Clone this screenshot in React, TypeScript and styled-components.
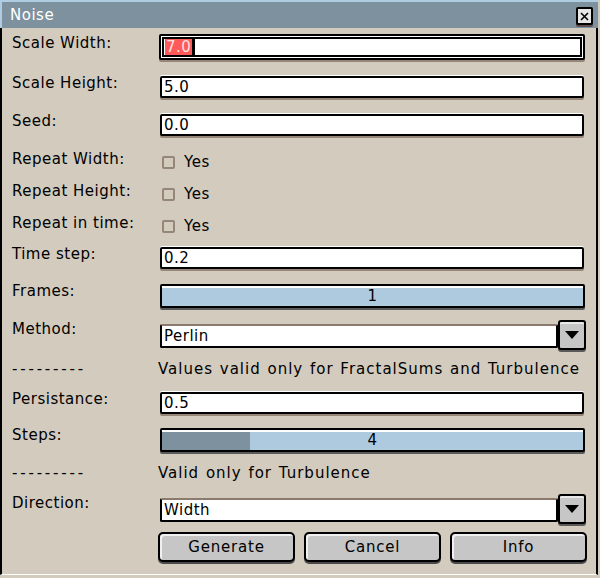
import React from 'react'
import styled, { createGlobalStyle } from 'styled-components'

const GlobalStyle = createGlobalStyle`
  html, body {
    margin: 0;
    padding: 0;
    background: #d2cbbe;
  }
  * {
    box-sizing: border-box;
  }
`

const Window = styled.div`
  width: 598px;
  height: 575px;
  background: #d2cbbe;
  font-family: 'DejaVu Sans', 'Liberation Sans', sans-serif;
  font-size: 15px;
  letter-spacing: 0.5px;
  color: #000;
  display: flex;
  flex-direction: column;
  box-shadow: 0 3px 0 #a08a7a;
`

const TitleBar = styled.div`
  height: 28px;
  flex: none;
  background: #7d929e;
  border-top: 2px solid #aecde0;
  border-left: 2px solid #aecde0;
  display: flex;
  align-items: center;
  justify-content: space-between;
  padding: 0 5px 0 8px;
`

const Title = styled.span`
  color: #fff;
  line-height: 18px;
`

const CloseButton = styled.div`
  width: 17px;
  height: 18px;
  margin-top: 2px;
  background: #e6e6e6;
  border: 2px solid #000;
  border-radius: 2px;
  box-shadow: 0 2px 0 #5a4f4f;
  display: flex;
  align-items: center;
  justify-content: center;
`

const Body = styled.div`
  flex: 1;
  border-left: 2px solid #000;
  border-right: 2px solid #000;
  border-bottom: 1px solid #fff;
  padding: 6px 10px 0 10px;
  display: flex;
  flex-direction: column;
`

const Row = styled.div<{ $h: number }>`
  height: ${p => p.$h}px;
  flex: none;
  display: grid;
  grid-template-columns: 148px 1fr;
  align-items: start;
`

const Label = styled.div`
  line-height: 18px;
  white-space: nowrap;
`

const Entry = styled.div<{ $top?: number }>`
  margin-top: ${p => p.$top ?? 2}px;
  width: 424px;
  height: 22px;
  background: #fff;
  border: 2px solid #000;
  border-radius: 2px;
  box-shadow: 0 -1px 0 #fff, 0 2px 0 #958677;
  display: flex;
  align-items: center;
  padding-left: 2px;
  line-height: 18px;
`

const FocusedEntry = styled(Entry)`
  width: 426px;
  height: 26px;
  margin-left: -1px;
  padding-left: 4px;
  box-shadow: inset 0 0 0 1px #fff, inset 0 0 0 3px #000, 0 2px 0 #958677;
`

const Selection = styled.span`
  background: #ff5a5a;
  color: #ffe0e0;
  padding: 0 1px;
  line-height: 16px;
`

const Caret = styled.span`
  width: 3px;
  height: 16px;
  background: #000;
`

const CheckWrap = styled.div`
  display: flex;
  align-items: center;
  gap: 9px;
  margin-top: 3px;
  padding-left: 2px;
  line-height: 18px;
`

const CheckBox = styled.span`
  width: 13px;
  height: 13px;
  border: 2px solid #958677;
  border-radius: 2px;
`

const Slider = styled.div`
  margin-top: 2px;
  width: 425px;
  height: 24px;
  border: 2px solid #000;
  border-radius: 2px;
  background: #aecadf;
  box-shadow: inset 0 2px 0 #fff, 0 2px 0 #5a5a5a;
  position: relative;
  display: flex;
  align-items: center;
  justify-content: center;
  line-height: 18px;
  overflow: hidden;
`

const SliderFill = styled.div`
  position: absolute;
  left: 0;
  top: 2px;
  bottom: 0;
  background: #7d929e;
`

const SliderValue = styled.span`
  position: relative;
`

const Combo = styled.div`
  display: flex;
  align-items: flex-start;
  width: 428px;
`

const ComboEntry = styled(Entry)`
  width: 398px;
  margin-top: 4px;
  height: 24px;
  border-top-color: #8a7b6e;
  box-shadow: none;
`

const ComboButton = styled.div`
  width: 28px;
  height: 30px;
  background: #c6c6c6;
  border: 2px solid #000;
  border-radius: 3px;
  box-shadow: inset 0 2px 0 #e8e8e8, 0 2px 0 #5a5a5a;
  display: flex;
  align-items: center;
  justify-content: center;
`

const Dashes = styled.div`
  line-height: 18px;
  letter-spacing: 2.8px;
  white-space: nowrap;
`

const Note = styled.div`
  margin-left: -2px;
  line-height: 18px;
  letter-spacing: 1px;
  word-spacing: 1px;
  white-space: nowrap;
`

const ButtonBar = styled.div`
  grid-column: 1 / span 2;
  margin-top: 2px;
  margin-left: 146px;
  display: grid;
  grid-template-columns: 137px 137px 137px;
  gap: 9px;
`

const Button = styled.div`
  height: 30px;
  background: #c6c6c6;
  border: 2px solid #000;
  border-radius: 5px;
  box-shadow: inset 2px 2px 0 #f0f0f0, 0 2px 0 #4a4a4a;
  display: flex;
  align-items: center;
  justify-content: center;
  line-height: 18px;
  letter-spacing: 0.8px;
`

const Arrow = () => (
  <svg width="14" height="8" viewBox="0 0 14 8">
    <path d="M0 0H14L7 8Z" fill="#000" />
  </svg>
)

const CloseIcon = () => (
  <svg width="9" height="9" viewBox="0 0 9 9">
    <path d="M1 1L8 8M8 1L1 8" stroke="#000" strokeWidth="1.6" />
  </svg>
)

const CheckRow = ({ label, h }: { label: string; h: number }) => (
  <Row $h={h}>
    <Label>{label}</Label>
    <CheckWrap>
      <CheckBox />
      <span>Yes</span>
    </CheckWrap>
  </Row>
)

export default function App() {
  return (
    <>
      <GlobalStyle />
      <Window>
        <TitleBar>
          <Title>Noise</Title>
          <CloseButton>
            <CloseIcon />
          </CloseButton>
        </TitleBar>
        <Body>
          <Row $h={40}>
            <Label>Scale Width:</Label>
            <FocusedEntry $top={0}>
              <Selection>7.0</Selection>
              <Caret />
            </FocusedEntry>
          </Row>
          <Row $h={38}>
            <Label>Scale Height:</Label>
            <Entry>5.0</Entry>
          </Row>
          <Row $h={38}>
            <Label>Seed:</Label>
            <Entry>0.0</Entry>
          </Row>
          <CheckRow label="Repeat Width:" h={32} />
          <CheckRow label="Repeat Height:" h={32} />
          <CheckRow label="Repeat in time:" h={31} />
          <Row $h={37}>
            <Label>Time step:</Label>
            <Entry>0.2</Entry>
          </Row>
          <Row $h={38}>
            <Label>Frames:</Label>
            <Slider>
              <SliderValue>1</SliderValue>
            </Slider>
          </Row>
          <Row $h={40}>
            <Label>Method:</Label>
            <Combo>
              <ComboEntry>Perlin</ComboEntry>
              <ComboButton>
                <Arrow />
              </ComboButton>
            </Combo>
          </Row>
          <Row $h={30}>
            <Dashes>---------</Dashes>
            <Note>Values valid only for FractalSums and Turbulence</Note>
          </Row>
          <Row $h={36}>
            <Label>Persistance:</Label>
            <Entry>0.5</Entry>
          </Row>
          <Row $h={38}>
            <Label>Steps:</Label>
            <Slider>
              <SliderFill style={{ width: `${(3 / 15) * 100 + 1}%` }} />
              <SliderValue>4</SliderValue>
            </Slider>
          </Row>
          <Row $h={30}>
            <Dashes>---------</Dashes>
            <Note>Valid only for Turbulence</Note>
          </Row>
          <Row $h={36}>
            <Label>Direction:</Label>
            <Combo>
              <ComboEntry>Width</ComboEntry>
              <ComboButton>
                <Arrow />
              </ComboButton>
            </Combo>
          </Row>
          <Row $h={36}>
            <ButtonBar>
              <Button>Generate</Button>
              <Button>Cancel</Button>
              <Button>Info</Button>
            </ButtonBar>
          </Row>
        </Body>
      </Window>
    </>
  )
}
